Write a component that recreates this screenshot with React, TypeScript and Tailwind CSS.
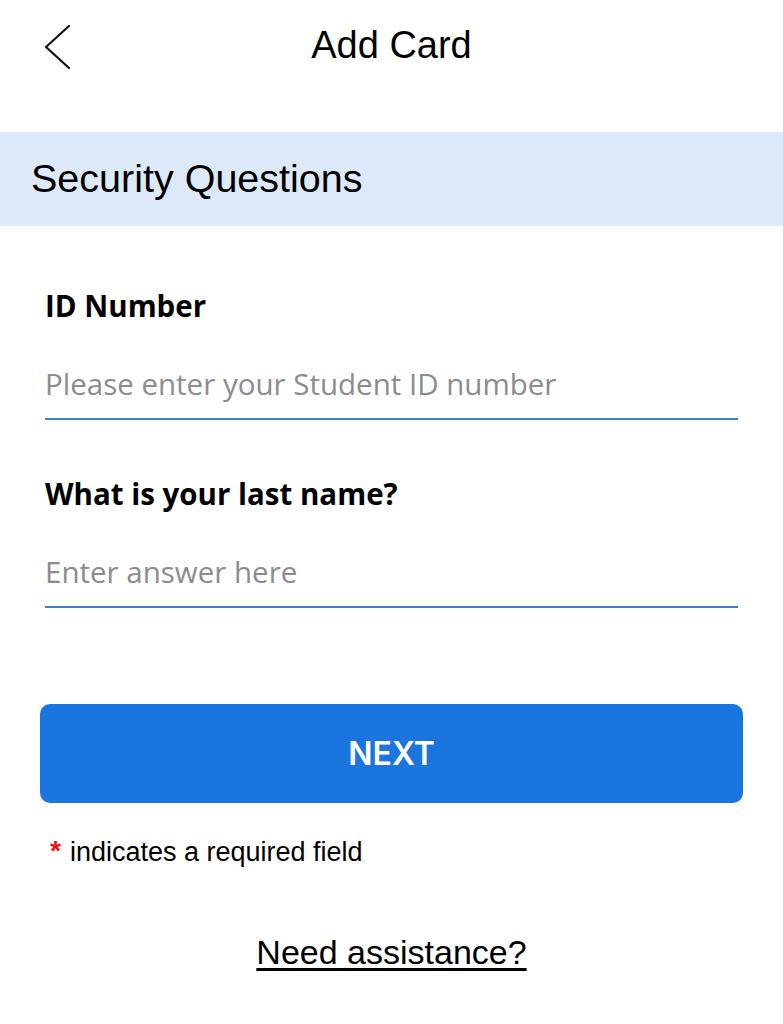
export default function App() {
  return (
    <div className="min-h-screen w-full bg-white text-black">
      {/* header */}
      <div className="relative flex h-[90px] items-center justify-center">
        <button type="button" className="absolute left-[38px] top-[20px] p-1" aria-label="Back">
          <svg width="30" height="46" viewBox="0 0 30 46" fill="none">
            <path d="M27 2 L4 23 L27 44" stroke="#111" strokeWidth="2.2" strokeLinecap="round" strokeLinejoin="round" />
          </svg>
        </button>
        <h1 className="font-['Liberation_Sans',Arial,sans-serif] text-[38px] leading-none">Add Card</h1>
      </div>

      <div className="mt-[42px] flex h-[94px] items-center bg-[#dde9f8] px-[31px]">
        <h2 className="font-['Liberation_Sans',Arial,sans-serif] text-[39.5px] leading-none">Security Questions</h2>
      </div>

      <form className="px-[45px] pt-[65px] font-['Open_Sans',sans-serif]" onSubmit={(e) => e.preventDefault()}>
        <label className="block">
          <span className="block text-[29.5px] font-bold leading-none">ID Number</span>
          <input
            className="mt-[42px] block w-full border-b-2 border-[#3f7fcf] bg-transparent pb-[14px] text-[29.5px] leading-none outline-none placeholder:text-[#8c8c8c]"
            placeholder="Please enter your Student ID number"
          />
        </label>
        <label className="mt-[59px] block">
          <span className="block text-[29.5px] font-bold leading-none">What is your last name?</span>
          <input
            className="mt-[43px] block w-full border-b-2 border-[#3f7fcf] bg-transparent pb-[14px] text-[29.5px] leading-none outline-none placeholder:text-[#8c8c8c]"
            placeholder="Enter answer here"
          />
        </label>
      </form>

      <div className="px-[40px] font-['Liberation_Sans',Arial,sans-serif]">
        <button
          type="button"
          className="mt-[96px] flex h-[99px] w-full items-center justify-center rounded-[10px] bg-[#1a75de] font-['Inter',sans-serif] text-[32px] font-semibold text-white"
        >
          NEXT
        </button>
        <p className="mt-[34px] flex items-start pl-[10px] text-[27px] leading-none">
          <span className="mr-[9px] text-[28px] font-bold text-[#e8141b]">*</span>
          <span className="mt-[2px]">indicates a required field</span>
        </p>
        <div className="mt-[69px] flex justify-center">
          <a href="#" className="text-[34px] leading-none text-black underline underline-offset-4">
            Need assistance?
          </a>
        </div>
      </div>
    </div>
  );
}
